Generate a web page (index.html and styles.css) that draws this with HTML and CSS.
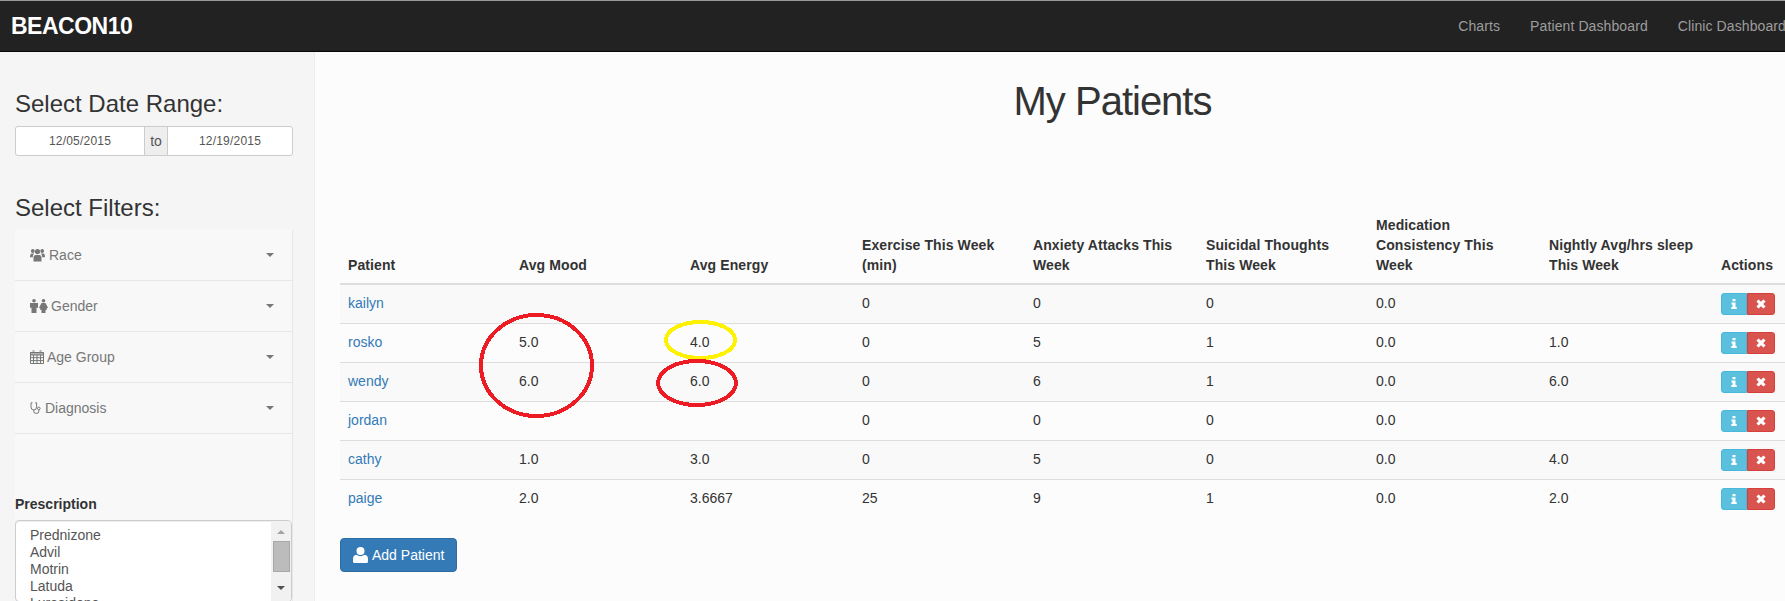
FILE: index.html
```html
<!DOCTYPE html>
<html lang="en">
<head>
<meta charset="utf-8">
<title>BEACON10</title>
<link rel="stylesheet" href="styles.css">
</head>
<body>
<nav class="navbar">
  <a class="brand" href="#">BEACON10</a>
  <ul class="nav-links">
    <li><a href="#">Charts</a></li>
    <li><a href="#">Patient Dashboard</a></li>
    <li><a href="#">Clinic Dashboard</a></li>
  </ul>
</nav>
<div class="layout">
  <aside class="sidebar">
    <h3 class="side-title first">Select Date Range:</h3>
    <div class="date-group">
      <div class="date-input start">12/05/2015</div>
      <div class="date-addon">to</div>
      <div class="date-input end">12/19/2015</div>
    </div>
    <h3 class="side-title second">Select Filters:</h3>
    <div class="filters">
      <div class="filter">
        <svg class="ico ico-race" viewBox="0 0 15 14"><circle cx="2.8" cy="3" r="1.9"/><circle cx="12.2" cy="3" r="1.9"/><circle cx="7.5" cy="3.6" r="2.6"/><path d="M3.5 13.5V9.6Q3.5 7 5.5 7H9.5Q11.5 7 11.5 9.6V13.5Z"/><path d="M0 9.3Q0 5.6 1.8 5.6H4.2Q2.9 6.6 2.8 9.3Z"/><path d="M15 9.3Q15 5.6 13.2 5.6H10.8Q12.1 6.6 12.2 9.3Z"/></svg>
        <span>Race</span><i class="caret"></i>
      </div>
      <div class="filter">
        <svg class="ico ico-gender" viewBox="0 0 18 14"><circle cx="4" cy="1.800" r="1.800"/><path d="M0 4H8V8.800H6.500V14H1.500V8.800H0Z"/><circle cx="13.500" cy="1.800" r="1.800"/><path d="M11.500 4H15.500L18 8.800 16.600 9.400 16.800 11H15.500V14H11.500V11H10.200L10.400 9.400 9 8.800Z"/></svg>
        <span>Gender</span><i class="caret"></i>
      </div>
      <div class="filter">
        <svg class="ico ico-cal" viewBox="0 0 14 14"><path class="line" d="M.5 2.5H13.5V13.5H.5ZM.5 5H13.5M.5 7.7H13.5M.5 10.6H13.5M3.5 5V13.5M7 5V13.5M10.5 5V13.5"/><path d="M0 2H14V5H0ZM2.5 0H4.5V3H2.5ZM9.5 0H11.500V3H9.500Z"/></svg>
        <span>Age Group</span><i class="caret"></i>
      </div>
      <div class="filter">
        <svg class="ico ico-steth" viewBox="0 0 11 12"><path class="line" d="M2.500 .8H1V4.800Q1 8 3.800 8 6.600 8 6.600 4.800V.8H5.100M3.800 8V9.800Q3.800 11.400 6.200 11.400 8.800 11.400 8.800 9.800V7.800"/><circle class="line" cx="8.800" cy="6.400" r="1.300"/></svg>
        <span>Diagnosis</span><i class="caret"></i>
      </div>
      <label class="rx-label">Prescription</label>
      <div class="rx-select">
        <ul class="rx-options">
          <li>Prednizone</li>
          <li>Advil</li>
          <li>Motrin</li>
          <li>Latuda</li>
          <li>Lurasidone</li>
        </ul>
        <div class="scrollbar">
          <i class="arrow up"></i>
          <div class="thumb"></div>
          <i class="arrow down"></i>
        </div>
      </div>
    </div>
  </aside>
  <main class="main">
    <h1 class="page-title">My Patients</h1>
    <table class="patients">
      <colgroup>
        <col class="c171"><col class="c171"><col class="c172"><col class="c171"><col class="c173"><col class="c170"><col class="c173"><col class="c172"><col class="c72">
      </colgroup>
      <thead>
        <tr>
          <th>Patient</th><th>Avg Mood</th><th>Avg Energy</th>
          <th>Exercise This Week (min)</th><th>Anxiety Attacks This Week</th>
          <th>Suicidal Thoughts This Week</th><th>Medication Consistency This Week</th>
          <th>Nightly Avg/hrs sleep This Week</th><th>Actions</th>
        </tr>
      </thead>
      <tbody>
        <tr><td><a href="#">kailyn</a></td><td></td><td></td><td>0</td><td>0</td><td>0</td><td>0.0</td><td></td><td><div class="btns"><span class="btn-i"><svg viewBox="0 0 6 10"><path d="M1.500 0H4.500V2.300H1.500ZM.5 3.400H4.500V8H5.700V10H.3V8H1.500V5.400H.5Z"/></svg></span><span class="btn-x"><svg viewBox="0 0 10 10"><path d="M2.600 .4 5 2.800 7.400 .4 9.600 2.600 7.200 5 9.600 7.400 7.400 9.600 5 7.200 2.600 9.600 .4 7.400 2.800 5 .4 2.600Z"/></svg></span></div></td></tr>
        <tr><td><a href="#">rosko</a></td><td>5.0</td><td>4.0</td><td>0</td><td>5</td><td>1</td><td>0.0</td><td>1.0</td><td><div class="btns"><span class="btn-i"><svg viewBox="0 0 6 10"><path d="M1.500 0H4.500V2.300H1.500ZM.5 3.400H4.500V8H5.700V10H.3V8H1.500V5.400H.5Z"/></svg></span><span class="btn-x"><svg viewBox="0 0 10 10"><path d="M2.600 .4 5 2.800 7.400 .4 9.600 2.600 7.200 5 9.600 7.400 7.400 9.600 5 7.200 2.600 9.600 .4 7.400 2.800 5 .4 2.600Z"/></svg></span></div></td></tr>
        <tr><td><a href="#">wendy</a></td><td>6.0</td><td>6.0</td><td>0</td><td>6</td><td>1</td><td>0.0</td><td>6.0</td><td><div class="btns"><span class="btn-i"><svg viewBox="0 0 6 10"><path d="M1.500 0H4.500V2.300H1.500ZM.5 3.400H4.500V8H5.700V10H.3V8H1.500V5.400H.5Z"/></svg></span><span class="btn-x"><svg viewBox="0 0 10 10"><path d="M2.600 .4 5 2.800 7.400 .4 9.600 2.600 7.200 5 9.600 7.400 7.400 9.600 5 7.200 2.600 9.600 .4 7.400 2.800 5 .4 2.600Z"/></svg></span></div></td></tr>
        <tr><td><a href="#">jordan</a></td><td></td><td></td><td>0</td><td>0</td><td>0</td><td>0.0</td><td></td><td><div class="btns"><span class="btn-i"><svg viewBox="0 0 6 10"><path d="M1.500 0H4.500V2.300H1.500ZM.5 3.400H4.500V8H5.700V10H.3V8H1.500V5.400H.5Z"/></svg></span><span class="btn-x"><svg viewBox="0 0 10 10"><path d="M2.600 .4 5 2.800 7.400 .4 9.600 2.600 7.200 5 9.600 7.400 7.400 9.600 5 7.200 2.600 9.600 .4 7.400 2.800 5 .4 2.600Z"/></svg></span></div></td></tr>
        <tr><td><a href="#">cathy</a></td><td>1.0</td><td>3.0</td><td>0</td><td>5</td><td>0</td><td>0.0</td><td>4.0</td><td><div class="btns"><span class="btn-i"><svg viewBox="0 0 6 10"><path d="M1.500 0H4.500V2.300H1.500ZM.5 3.400H4.500V8H5.700V10H.3V8H1.500V5.400H.5Z"/></svg></span><span class="btn-x"><svg viewBox="0 0 10 10"><path d="M2.600 .4 5 2.800 7.400 .4 9.600 2.600 7.200 5 9.600 7.400 7.400 9.600 5 7.200 2.600 9.600 .4 7.400 2.800 5 .4 2.600Z"/></svg></span></div></td></tr>
        <tr><td><a href="#">paige</a></td><td>2.0</td><td>3.6667</td><td>25</td><td>9</td><td>1</td><td>0.0</td><td>2.0</td><td><div class="btns"><span class="btn-i"><svg viewBox="0 0 6 10"><path d="M1.500 0H4.500V2.300H1.500ZM.5 3.400H4.500V8H5.700V10H.3V8H1.500V5.400H.5Z"/></svg></span><span class="btn-x"><svg viewBox="0 0 10 10"><path d="M2.600 .4 5 2.800 7.400 .4 9.600 2.600 7.200 5 9.600 7.400 7.400 9.600 5 7.200 2.600 9.600 .4 7.400 2.800 5 .4 2.600Z"/></svg></span></div></td></tr>
      </tbody>
    </table>
    <button class="add-btn" type="button">
      <svg viewBox="0 0 15 16"><circle cx="7.500" cy="4" r="4"/><path d="M0 14.500V12Q0 8.200 3.500 7.800 5 9.200 7.500 9.200 10 9.200 11.500 7.800 15 8.200 15 12V14.500Q15 16 13.500 16H1.500Q0 16 0 14.500Z"/></svg>
      <span>Add Patient</span>
    </button>
  </main>
</div>
<svg class="annotations" viewBox="0 0 1785 601">
  <ellipse class="mark-red" cx="536.500" cy="365.500" rx="55.500" ry="50.500"/>
  <ellipse class="mark-yellow" cx="700.500" cy="340" rx="34.500" ry="18"/>
  <ellipse class="mark-red" cx="697" cy="383" rx="39" ry="22"/>
</svg>
</body>
</html>
```
FILE: styles.css
```css
* { box-sizing: border-box; }
html, body { height: 100%; }
body {
  margin: 0;
  position: relative;
  overflow: hidden;
  font-family: "Liberation Sans", Arial, sans-serif;
  font-size: 14px;
  line-height: 20px;
  color: #333;
  background: #fcfcfc;
}
a { color: #337ab7; text-decoration: none; }

.navbar {
  height: 52px;
  background: #222;
  border-top: 1px solid #999;
  border-bottom: 1px solid #080808;
  display: flex;
  justify-content: space-between;
  align-items: center;
  padding-left: 11px;
}
.brand { color: #fff; font-size: 23px; letter-spacing: -.5px; font-weight: bold; line-height: 50px; }
.nav-links { display: flex; list-style: none; margin: 0 -16px 0 0; padding: 0; flex: none; letter-spacing: .1px; }
.nav-links a { display: block; padding: 0 15px; color: #9d9d9d; line-height: 50px; white-space: nowrap; }

.layout { display: flex; height: 549px; }
.sidebar {
  width: 315px;
  flex: none;
  background: #f5f5f5;
  border-right: 1px solid #eee;
  padding: 0 21px 0 15px;
}
.side-title { margin: 0; font-size: 24px; font-weight: normal; line-height: 26px; }
.side-title.first { padding-top: 39px; }
.side-title.second { margin-top: 39px; }

.date-group {
  display: flex;
  height: 30px;
  margin-top: 9px;
  border: 1px solid #ccc;
  border-radius: 3px;
  background: #fff;
  font-size: 12px;
  letter-spacing: .2px;
  line-height: 28px;
  color: #555;
  text-align: center;
}
.date-input.start { width: 128px; }
.date-input.end { flex: 1; }
.date-addon {
  width: 24px;
  background: #eee;
  border: solid #ccc;
  border-width: 0 1px;
  font-size: 14px;
  letter-spacing: 0;
}

.filters { margin-top: 9px; height: 371px; background: #f8f8f8; border-right: 1px solid #e7e7e7; }
.filter {
  height: 51px;
  border-bottom: 1px solid #e7e7e7;
  padding: 0 18px 0 15px;
  display: flex;
  align-items: center;
  color: #777;
}
.ico { fill: #777; flex: none; margin-right: 4px; }
.ico .line { fill: none; stroke: #777; stroke-width: 1; }
.ico-race { width: 15px; height: 14px; }
.ico-gender { width: 18px; height: 14px; margin-right: 3px; }
.ico-cal { width: 14px; height: 14px; margin-right: 3px; }
.ico-cal path:last-child { fill-opacity: .55; }
.ico-steth { width: 11px; height: 12px; }
.caret {
  margin-left: auto;
  border-top: 4px solid #777;
  border-left: 4px solid transparent;
  border-right: 4px solid transparent;
}
.rx-label { display: block; margin-top: 60px; font-weight: bold; color: #333; }
.rx-select {
  display: flex;
  height: 82px;
  margin-top: 6px;
  overflow: hidden;
  background: #fff;
  border: 1px solid #ccc;
  border-radius: 4px;
  box-shadow: inset 0 1px 1px rgba(0,0,0,.075);
  color: #555;
}
.rx-options {
  flex: 1;
  list-style: none;
  margin: 0;
  padding: 6px 14px;
  line-height: 17px;
}
.scrollbar {
  width: 20px;
  background: #f1f1f1;
  display: flex;
  flex-direction: column;
  align-items: center;
  padding-top: 9px;
}
.arrow { width: 0; height: 0; border-left: 4px solid transparent; border-right: 4px solid transparent; }
.arrow.up { border-bottom: 4px solid #a3a3a3; }
.arrow.down { border-top: 4px solid #505050; margin-top: 14px; }
.thumb { width: 17px; height: 31px; margin-top: 7px; background: #bcbcbc; border: 1px solid #a8a8a8; }

.main { flex: 1; min-width: 0; padding: 27px 0 0 25px; }
.page-title {
  margin: 0 0 84px;
  padding-left: 100px;
  font-size: 40px;
  font-weight: normal;
  letter-spacing: -1px;
  line-height: 44px;
  text-align: center;
}
.patients { width: 1445px; table-layout: fixed; border-collapse: separate; border-spacing: 0; }
.c170 { width: 170px; }
.c171 { width: 171px; }
.c172 { width: 172px; }
.c173 { width: 173px; }
.c72 { width: 72px; }
.patients th {
  padding: 8px;
  text-align: left;
  vertical-align: bottom;
  letter-spacing: .1px;
  border-bottom: 2px solid #ddd;
}
.patients td { height: 39px; padding: 8px; vertical-align: top; border-bottom: 1px solid #ddd; }
.patients tbody tr:nth-child(odd) td { background: #f9f9f9; }
.patients tbody tr:last-child td { height: 38px; border-bottom: 0; }
.btns { display: flex; width: 54px; height: 22px; }
.btn-i, .btn-x { display: flex; align-items: center; justify-content: center; height: 22px; border: 1px solid; }
.btn-i { width: 26px; background: #5bc0de; border-color: #46b8da; border-radius: 3px 0 0 3px; }
.btn-x { width: 28px; background: #d9534f; border-color: #d43f3a; border-radius: 0 3px 3px 0; }
.btn-i svg { width: 6px; height: 10px; fill: #fff; }
.btn-x svg { width: 10px; height: 10px; fill: #fff; }

.add-btn {
  display: flex;
  align-items: center;
  gap: 4px;
  height: 34px;
  margin-top: 20px;
  padding: 0 12px;
  background: #337ab7;
  border: 1px solid #2e6da4;
  border-radius: 4px;
  color: #fff;
  font: inherit;
}
.add-btn svg { width: 15px; height: 16px; fill: #fff; }

.annotations { position: absolute; left: 0; top: 0; width: 1785px; height: 601px; pointer-events: none; }
.mark-red, .mark-yellow { fill: none; stroke-width: 4; shape-rendering: crispEdges; }
.mark-red { stroke: #ed1c24; }
.mark-yellow { stroke: #fff200; }
```
